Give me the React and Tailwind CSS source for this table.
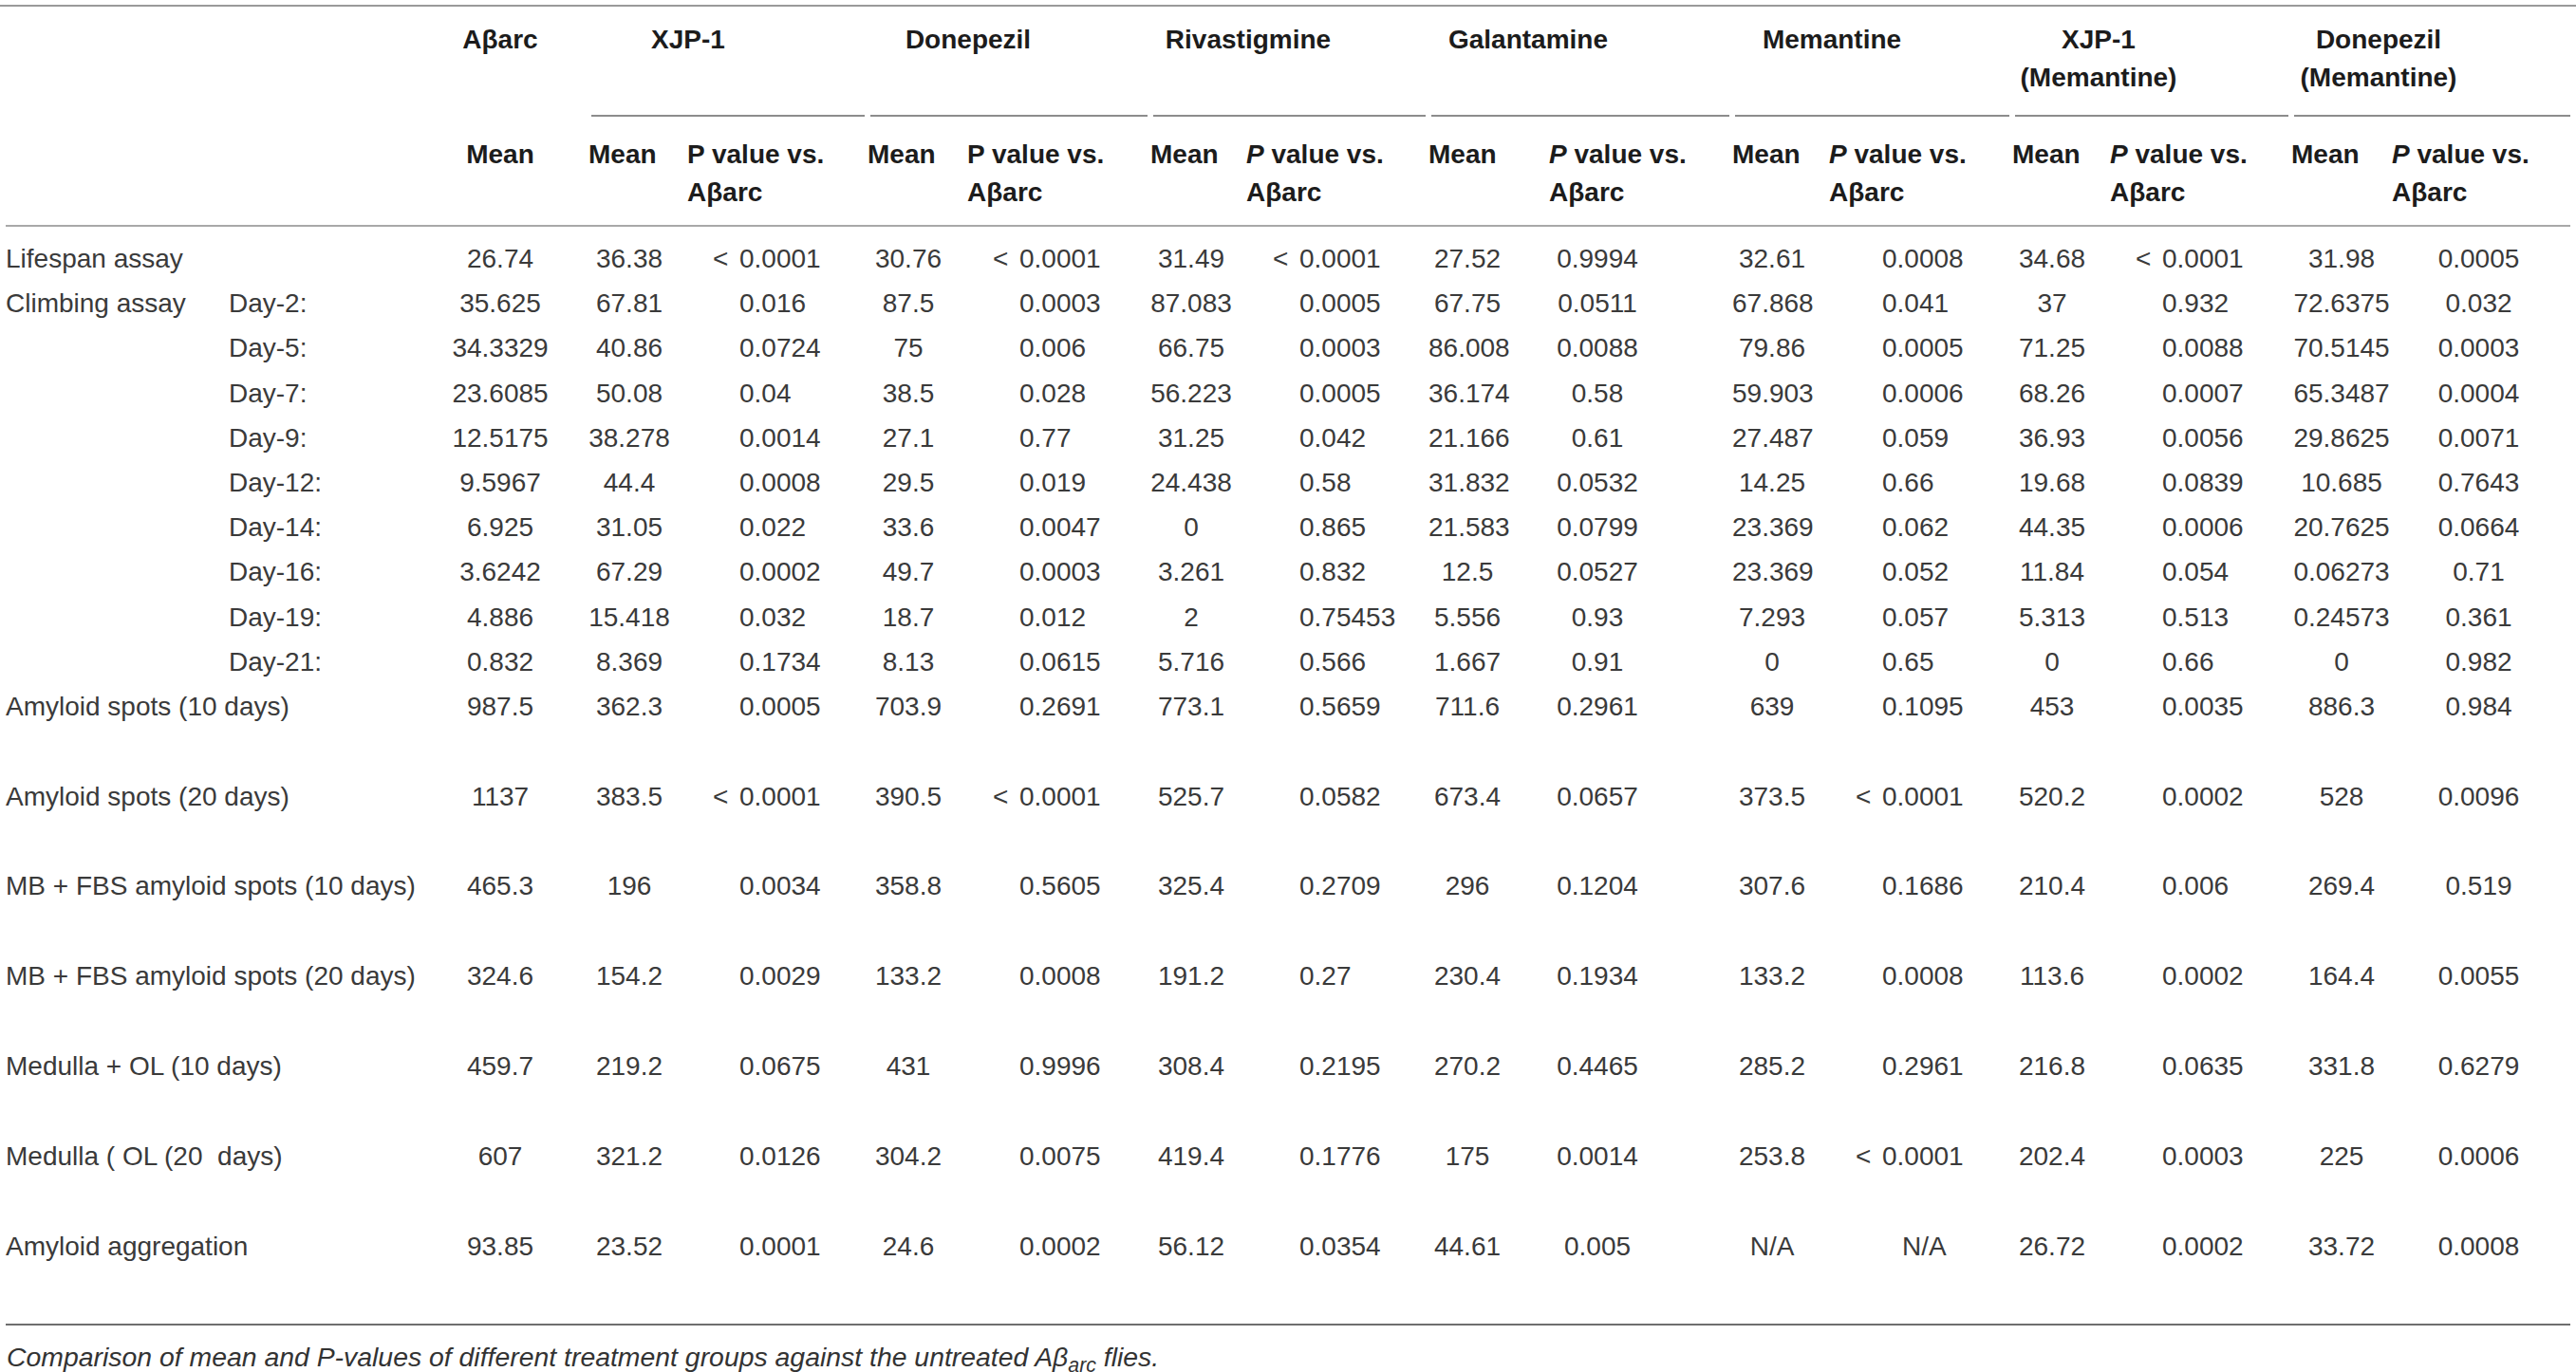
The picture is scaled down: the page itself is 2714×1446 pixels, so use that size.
// Comparison table: mean and P-values of treatment groups against untreated Aβarc flies.
const GRID =
  'grid grid-cols-[241px_193px_186px_86px_208px_86px_212px_86px_207px_82px_238px_84px_211px_84px_210px_106px_191px]';

// Per-group tweaks: header offset, "Mean" offset, P header inset, P value alignment.
const groups = [
  { key: 'xjp', title: ['XJP-1'], head: 'pr-[84px]', mean: 'pr-[22px]', pHead: 'pl-[18px]', italicP: false, pVal: 'pl-[73px] text-left', left: true },
  { key: 'don', title: ['Donepezil'], head: 'pr-[86px]', mean: 'pr-[20px]', pHead: 'pl-[19px]', italicP: false, pVal: 'pl-[74px] text-left', left: true },
  { key: 'riv', title: ['Rivastigmine'], head: 'pr-[87px]', mean: 'pr-[26px]', pHead: 'pl-[15px]', italicP: true, pVal: 'pl-[71px] text-left', left: true },
  { key: 'gal', title: ['Galantamine'], head: 'pr-[110px]', mean: 'pr-[20px]', pHead: 'pl-[45px]', italicP: true, pVal: 'pr-[46px] text-center', left: false },
  { key: 'mem', title: ['Memantine'], head: 'pr-[85px]', mean: 'pr-[22px]', pHead: 'pl-[18px]', italicP: true, pVal: 'pl-[74px] text-left', left: true },
  { key: 'xjpm', title: ['XJP-1', '(Memantine)'], head: 'pr-[112px]', mean: 'pr-[20px]', pHead: 'pl-[19px]', italicP: true, pVal: 'pl-[74px] text-left', left: true },
  { key: 'donm', title: ['Donepezil', '(Memantine)'], head: 'pr-[113px]', mean: 'pr-[42px]', pHead: 'pl-0', italicP: true, pVal: 'pr-[8px] text-center', left: false },
];

const LT = '< 0.0001';

const rows = [
  { label: 'Lifespan assay', v: ['26.74', '36.38', LT, '30.76', LT, '31.49', LT, '27.52', '0.9994', '32.61', '0.0008', '34.68', LT, '31.98', '0.0005'] },
  { label: 'Climbing assay', day: 'Day-2:', v: ['35.625', '67.81', '0.016', '87.5', '0.0003', '87.083', '0.0005', '67.75', '0.0511', '67.868', '0.041', '37', '0.932', '72.6375', '0.032'] },
  { day: 'Day-5:', v: ['34.3329', '40.86', '0.0724', '75', '0.006', '66.75', '0.0003', '86.008', '0.0088', '79.86', '0.0005', '71.25', '0.0088', '70.5145', '0.0003'] },
  { day: 'Day-7:', v: ['23.6085', '50.08', '0.04', '38.5', '0.028', '56.223', '0.0005', '36.174', '0.58', '59.903', '0.0006', '68.26', '0.0007', '65.3487', '0.0004'] },
  { day: 'Day-9:', v: ['12.5175', '38.278', '0.0014', '27.1', '0.77', '31.25', '0.042', '21.166', '0.61', '27.487', '0.059', '36.93', '0.0056', '29.8625', '0.0071'] },
  { day: 'Day-12:', v: ['9.5967', '44.4', '0.0008', '29.5', '0.019', '24.438', '0.58', '31.832', '0.0532', '14.25', '0.66', '19.68', '0.0839', '10.685', '0.7643'] },
  { day: 'Day-14:', v: ['6.925', '31.05', '0.022', '33.6', '0.0047', '0', '0.865', '21.583', '0.0799', '23.369', '0.062', '44.35', '0.0006', '20.7625', '0.0664'] },
  { day: 'Day-16:', v: ['3.6242', '67.29', '0.0002', '49.7', '0.0003', '3.261', '0.832', '12.5', '0.0527', '23.369', '0.052', '11.84', '0.054', '0.06273', '0.71'] },
  { day: 'Day-19:', v: ['4.886', '15.418', '0.032', '18.7', '0.012', '2', '0.75453', '5.556', '0.93', '7.293', '0.057', '5.313', '0.513', '0.24573', '0.361'] },
  { day: 'Day-21:', v: ['0.832', '8.369', '0.1734', '8.13', '0.0615', '5.716', '0.566', '1.667', '0.91', '0', '0.65', '0', '0.66', '0', '0.982'] },
  { label: 'Amyloid spots (10 days)', tall: true, v: ['987.5', '362.3', '0.0005', '703.9', '0.2691', '773.1', '0.5659', '711.6', '0.2961', '639', '0.1095', '453', '0.0035', '886.3', '0.984'] },
  { label: 'Amyloid spots (20 days)', tall: true, v: ['1137', '383.5', LT, '390.5', LT, '525.7', '0.0582', '673.4', '0.0657', '373.5', LT, '520.2', '0.0002', '528', '0.0096'] },
  { label: 'MB + FBS amyloid spots (10 days)', tall: true, v: ['465.3', '196', '0.0034', '358.8', '0.5605', '325.4', '0.2709', '296', '0.1204', '307.6', '0.1686', '210.4', '0.006', '269.4', '0.519'] },
  { label: 'MB + FBS amyloid spots (20 days)', tall: true, v: ['324.6', '154.2', '0.0029', '133.2', '0.0008', '191.2', '0.27', '230.4', '0.1934', '133.2', '0.0008', '113.6', '0.0002', '164.4', '0.0055'] },
  { label: 'Medulla + OL (10 days)', tall: true, v: ['459.7', '219.2', '0.0675', '431', '0.9996', '308.4', '0.2195', '270.2', '0.4465', '285.2', '0.2961', '216.8', '0.0635', '331.8', '0.6279'] },
  { label: 'Medulla ( OL (20  days)', tall: true, v: ['607', '321.2', '0.0126', '304.2', '0.0075', '419.4', '0.1776', '175', '0.0014', '253.8', LT, '202.4', '0.0003', '225', '0.0006'] },
  { label: 'Amyloid aggregation', tall: true, v: ['93.85', '23.52', '0.0001', '24.6', '0.0002', '56.12', '0.0354', '44.61', '0.005', 'N/A', 'N/A', '26.72', '0.0002', '33.72', '0.0008'] },
];

function PValue({ value, left }) {
  if (value.startsWith('< ')) {
    return (
      <>
        <span className="inline-block w-[28px] -ml-[28px]">&lt;</span>
        {value.slice(2)}
      </>
    );
  }
  if (value === 'N/A' && left) return <span className="ml-[21px]">N/A</span>;
  return value;
}

function Abarc() {
  return <>Aβarc</>;
}

export default function App() {
  return (
    <div className="w-[2714px] bg-white pt-[5px] font-['Liberation_Sans',Arial,sans-serif] text-[28px] text-[#3a3a3a]">
      <div className="border-t-2 border-[#9a9a9a]" />

      {/* group headings */}
      <div className={`${GRID} font-bold text-[#1c1c1c] leading-[40px]`}>
        <div className="col-span-2" />
        <div className="pt-[15px] text-center">
          <Abarc />
        </div>
        {groups.map((g) => (
          <div key={g.key} className={`col-span-2 mx-[3px] border-b-2 border-[#8c8c8c] pt-[15px] pb-[19px] text-center ${g.head}`}>
            {g.title.map((t) => (
              <div key={t}>{t}</div>
            ))}
          </div>
        ))}
      </div>

      {/* Mean / P value sub-headings */}
      <div className={`${GRID} font-bold text-[#1c1c1c] leading-[40px] pt-[20px] pb-[14px]`}>
        <div className="col-span-2" />
        <div className="text-center">Mean</div>
        {groups.map((g) => [
          <div key={g.key + 'm'} className={`text-center ${g.mean}`}>
            Mean
          </div>,
          <div key={g.key + 'p'} className={`whitespace-nowrap ${g.pHead}`}>
            <div>
              <span className={g.italicP ? 'italic' : ''}>P</span> value vs.
            </div>
            <div>
              <Abarc />
            </div>
          </div>,
        ])}
      </div>
      <div className="mx-[6px] border-t-2 border-[#a8a8a8]" />

      {/* body */}
      <div className="pt-[10px] pb-[11px] leading-[47.2px]">
        {rows.map((r, i) => (
          <div key={i} className={`${GRID} whitespace-nowrap ${r.tall ? 'h-[94.8px]' : 'h-[47.2px]'}`}>
            {r.day ? (
              <>
                <div className="pl-[6px]">{r.label || ''}</div>
                <div>{r.day}</div>
              </>
            ) : (
              <div className="col-span-2 whitespace-pre pl-[6px]">{r.label}</div>
            )}
            <div className="text-center">{r.v[0]}</div>
            {groups.map((g, gi) => [
              <div key={g.key + 'm'} className="text-center">
                {r.v[1 + gi * 2]}
              </div>,
              <div key={g.key + 'p'} className={g.pVal}>
                <PValue value={r.v[2 + gi * 2]} left={g.left} />
              </div>,
            ])}
          </div>
        ))}
      </div>
      <div className="mx-[6px] border-t-2 border-[#6e6e6e]" />

      <p className="mt-[16px] pl-[7px] text-[28.4px] italic leading-[34px] text-[#333]">
        Comparison of mean and P-values of different treatment groups against the untreated Aβ<sub>arc</sub> flies.
      </p>
    </div>
  );
}
